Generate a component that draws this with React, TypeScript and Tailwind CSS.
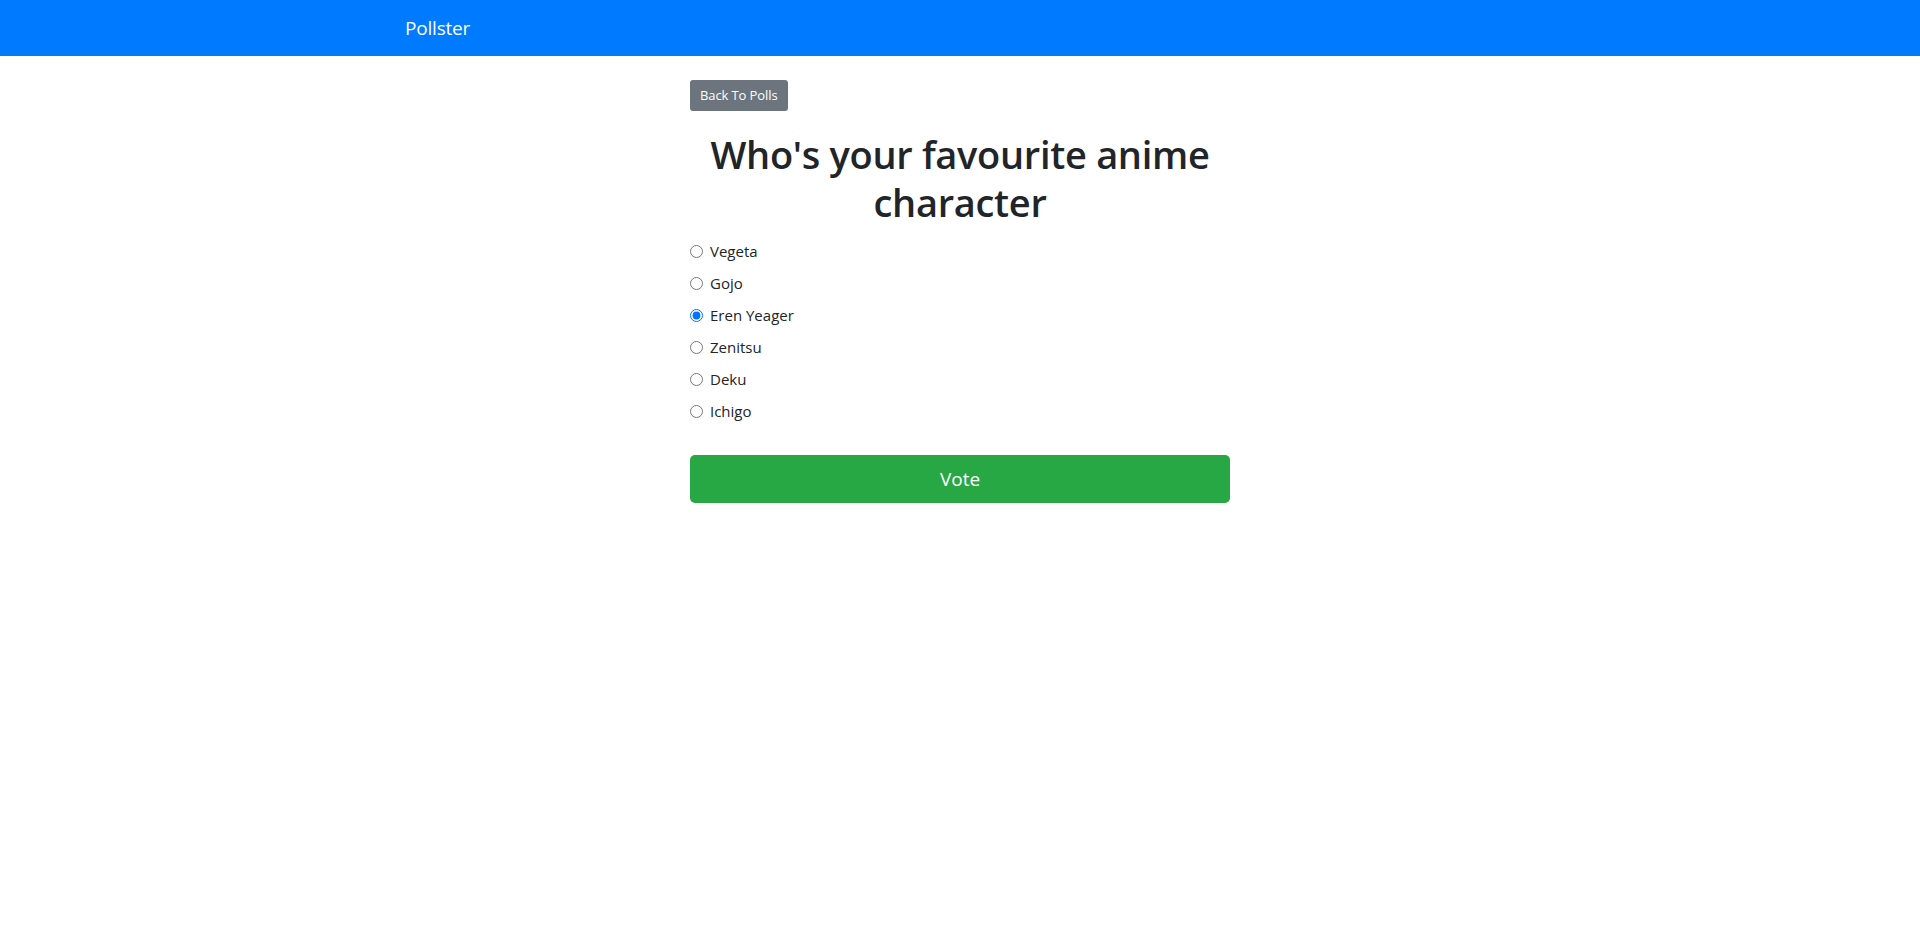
import { useState } from "react";

const choices = ["Vegeta", "Gojo", "Eren Yeager", "Zenitsu", "Deku", "Ichigo"];

export default function App() {
  const [picked, setPicked] = useState("Eren Yeager");

  return (
    <div className="min-h-screen bg-white text-[#212529]" style={{ fontFamily: "'Open Sans', 'Noto Sans', sans-serif" }}>
      {/* Navbar */}
      <nav className="h-14 bg-[#007bff] flex items-center">
        <div className="w-[1140px] mx-auto px-[15px]">
          <span className="text-[19px] text-white leading-[30px] tracking-[-0.2px]">Pollster</span>
        </div>
      </nav>

      {/* Poll */}
      <div className="w-[1140px] mx-auto px-[15px]">
        <div className="w-[540px] mx-auto pt-6">
          <button className="h-[31px] px-[10px] rounded-[3px] bg-[#6c757d] text-white text-[13px] leading-none tracking-[-0.1px]">
            Back To Polls
          </button>

          <h1 className="mt-[19px] mb-[5px] text-center text-[38px] leading-[48px] font-semibold tracking-[-0.3px]">
            Who's your favourite anime character
          </h1>

          <div className="flex flex-col pt-1">
            {choices.map((c) => (
              <label key={c} className="h-8 flex items-center gap-[7px] cursor-pointer text-[15px]">
                <input
                  type="radio"
                  name="choice"
                  className="w-[13px] h-[13px] m-0 accent-[#0075ff]"
                  checked={picked === c}
                  onChange={() => setPicked(c)}
                />
                <span>{c}</span>
              </label>
            ))}
          </div>

          <button className="mt-7 w-full h-12 rounded-[5px] bg-[#28a745] text-white text-[19px]">
            Vote
          </button>
        </div>
      </div>
    </div>
  );
}
